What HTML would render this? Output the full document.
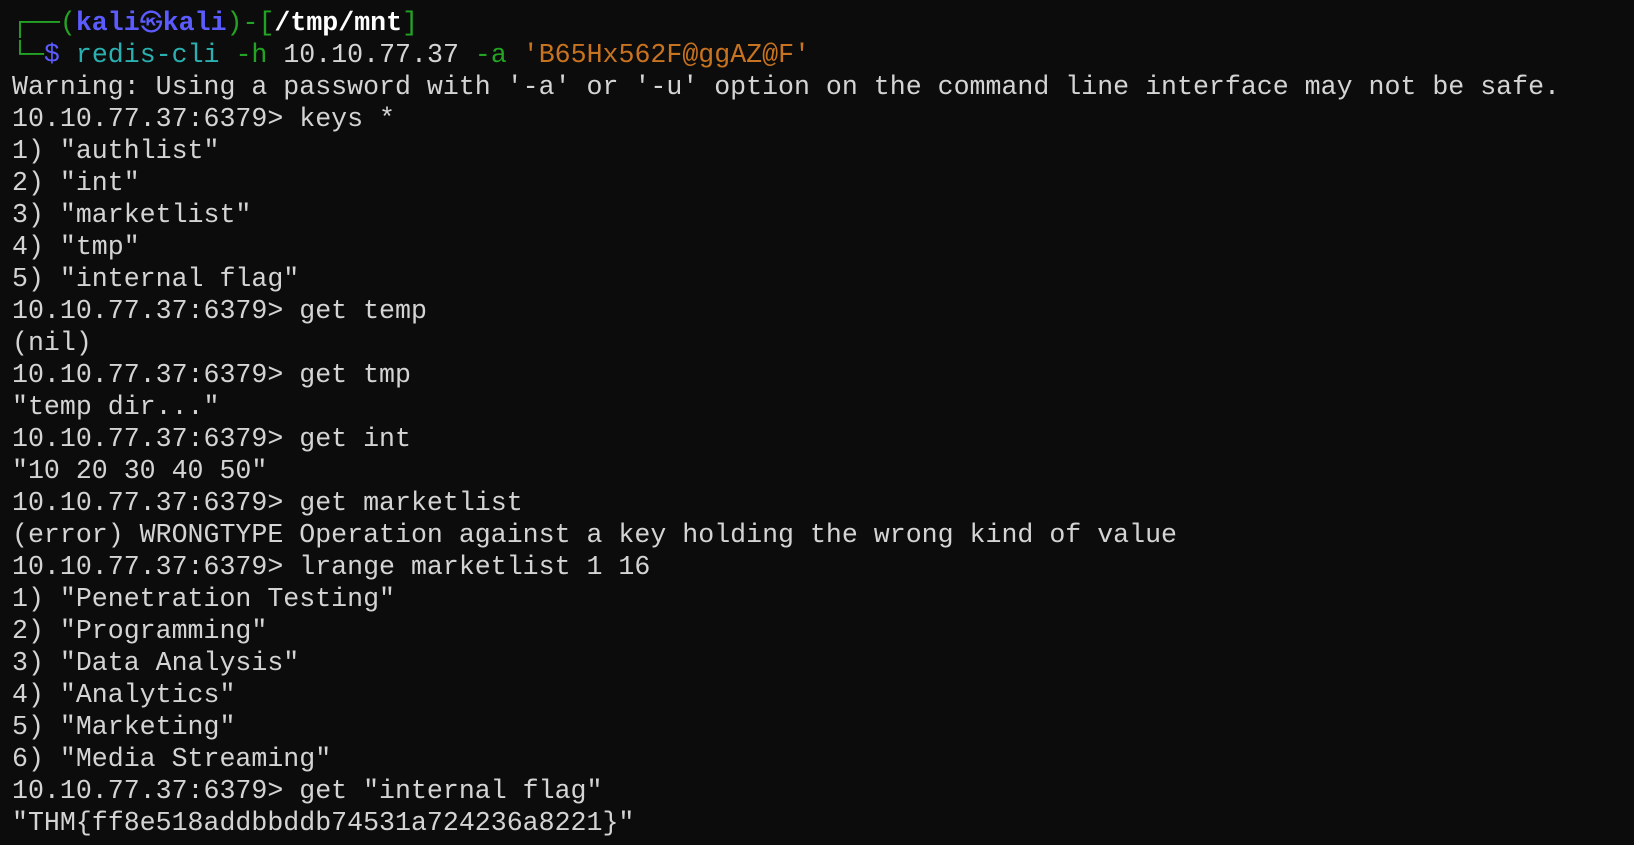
<!DOCTYPE html>
<html><head><meta charset="utf-8"><style>
html,body{margin:0;padding:0;background:#0c0c0c;width:1634px;height:845px;overflow:hidden}
pre{margin:0;position:absolute;left:12px;top:7px;font-family:"Liberation Mono","DejaVu Sans Mono",monospace;font-size:26.6px;line-height:32px;color:#d4d4d4;white-space:pre}
.g{color:#23a323}.b{color:#5b5bff;font-weight:bold}.w{color:#fff;font-weight:bold}.t{color:#2ab0b0}.o{color:#c8731f}.bl{color:#5b5bff}
.s{font-weight:normal;font-family:"DejaVu Sans",sans-serif;font-size:23px}
</style></head><body><pre><span class="g">┌──(</span><span class="b">kali<span class="s">㉿</span>kali</span><span class="g">)-[</span><span class="w">/tmp/mnt</span><span class="g">]</span>
<span class="g">└─</span><span class="bl">$</span> <span class="t">redis-cli</span> <span class="g">-h</span> 10.10.77.37 <span class="g">-a</span> <span class="o">'B65Hx562F@ggAZ@F'</span>
Warning: Using a password with '-a' or '-u' option on the command line interface may not be safe.
10.10.77.37:6379&gt; keys *
1) "authlist"
2) "int"
3) "marketlist"
4) "tmp"
5) "internal flag"
10.10.77.37:6379&gt; get temp
(nil)
10.10.77.37:6379&gt; get tmp
"temp dir..."
10.10.77.37:6379&gt; get int
"10 20 30 40 50"
10.10.77.37:6379&gt; get marketlist
(error) WRONGTYPE Operation against a key holding the wrong kind of value
10.10.77.37:6379&gt; lrange marketlist 1 16
1) "Penetration Testing"
2) "Programming"
3) "Data Analysis"
4) "Analytics"
5) "Marketing"
6) "Media Streaming"
10.10.77.37:6379&gt; get "internal flag"
"THM{ff8e518addbbddb74531a724236a8221}"
</pre></body></html>
